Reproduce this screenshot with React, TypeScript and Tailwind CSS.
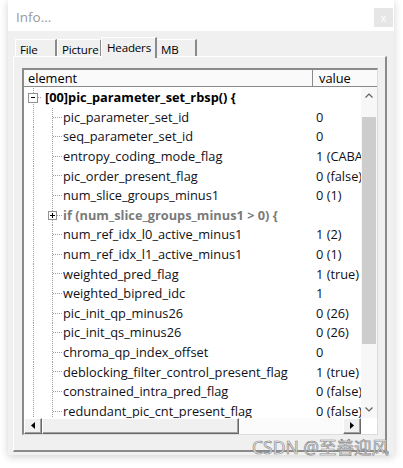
import React from 'react';

type Row = { name: string; value?: string; kind?: 'root' | 'group' | 'leaf' };

const rows: Row[] = [
  { name: '[00]pic_parameter_set_rbsp() {', kind: 'root' },
  { name: 'pic_parameter_set_id', value: '0' },
  { name: 'seq_parameter_set_id', value: '0' },
  { name: 'entropy_coding_mode_flag', value: '1 (CABAC)' },
  { name: 'pic_order_present_flag', value: '0 (false)' },
  { name: 'num_slice_groups_minus1', value: '0 (1)' },
  { name: 'if (num_slice_groups_minus1 > 0) {', kind: 'group' },
  { name: 'num_ref_idx_l0_active_minus1', value: '1 (2)' },
  { name: 'num_ref_idx_l1_active_minus1', value: '0 (1)' },
  { name: 'weighted_pred_flag', value: '1 (true)' },
  { name: 'weighted_bipred_idc', value: '1' },
  { name: 'pic_init_qp_minus26', value: '0 (26)' },
  { name: 'pic_init_qs_minus26', value: '0 (26)' },
  { name: 'chroma_qp_index_offset', value: '0' },
  { name: 'deblocking_filter_control_present_flag', value: '1 (true)' },
  { name: 'constrained_intra_pred_flag', value: '0 (false)' },
  { name: 'redundant_pic_cnt_present_flag', value: '0 (false)' },
];

const font = { fontFamily: '"Open Sans", "Noto Sans", sans-serif' };

function TreeLines({ kind }: { kind: Row['kind'] }) {
  const dot = { stroke: '#a0a0a0', strokeWidth: 1, strokeDasharray: '1 1' };
  if (kind === 'root') {
    return (
      <svg width="21" height="19.6" viewBox="0 0 21 19.6" className="shrink-0" shapeRendering="crispEdges">
        <line x1="9.5" y1="14" x2="9.5" y2="19.6" {...dot} />
        <line x1="9.5" y1="0" x2="9.5" y2="5" {...dot} />
        <line x1="14" y1="9.5" x2="18" y2="9.5" {...dot} />
        <rect x="4.5" y="5.5" width="9" height="9" fill="#fff" stroke="#919191" />
        <line x1="6.5" y1="10" x2="11.5" y2="10" stroke="#000" />
      </svg>
    );
  }
  return (
    <svg width="39" height="19.6" viewBox="0 0 39 19.6" className="shrink-0" shapeRendering="crispEdges">
      <line x1="9.5" y1="0" x2="9.5" y2="19.6" {...dot} />
      <line x1="28.5" y1="0" x2="28.5" y2="19.6" {...dot} />
      <line x1="29" y1="9.5" x2="38" y2="9.5" {...dot} />
      {kind === 'group' && (
        <>
          <rect x="24.5" y="5.5" width="8" height="8" fill="#fff" stroke="#919191" />
          <line x1="26.5" y1="9.5" x2="31" y2="9.5" stroke="#000" />
          <line x1="28.5" y1="7.5" x2="28.5" y2="12" stroke="#000" />
        </>
      )}
    </svg>
  );
}

function TreeRow({ row }: { row: Row }) {
  const isRoot = row.kind === 'root';
  const isGroup = row.kind === 'group';
  return (
    <div className="flex h-[19.6px] shrink-0 items-center">
      <div className="flex w-[292px] shrink-0 items-center overflow-hidden">
        <TreeLines kind={row.kind} />
        <span
          className={
            isRoot
              ? 'whitespace-nowrap text-[12.8px] font-bold text-black'
              : isGroup
              ? 'whitespace-nowrap text-[12.8px] font-bold text-[#7a7a7a]'
              : 'whitespace-nowrap text-[12.8px] text-[#101018]'
          }
        >
          {row.name}
        </span>
      </div>
      <span className="whitespace-nowrap text-[12.8px] text-[#101018]">{row.value}</span>
    </div>
  );
}

function ClassicButton({ children, className = '' }: { children?: React.ReactNode; className?: string }) {
  return (
    <div className={`border border-t-white border-l-white border-r-[#696969] border-b-[#696969] bg-[#f0f0f0] ${className}`}>
      <div className="flex h-full w-full items-center justify-center border-r border-b border-r-[#a0a0a0] border-b-[#a0a0a0]">
        {children}
      </div>
    </div>
  );
}

function Tab({ label, active }: { label: string; active?: boolean }) {
  if (active) {
    return (
      <div className="relative z-10 -mx-[1px] flex h-[21px] w-[56px] items-start border-t border-l border-r-2 border-t-white border-l-white border-r-[#8a8a8a] bg-[#f0f0f0] pl-[5px] pt-[1px] text-[11.6px] leading-[17px] tracking-[-0.2px] text-black">
        {label}
      </div>
    );
  }
  return (
    <div className="mt-[2px] flex h-[18px] items-start border-t border-l border-r-2 border-t-white border-l-white border-r-[#8a8a8a] bg-[#f0f0f0] pl-[4px] text-[11.6px] leading-[19px] tracking-[-0.2px] text-black">
      {label}
    </div>
  );
}

export default function App() {
  return (
    <div className="relative h-[468px] w-[403px] overflow-hidden bg-white" style={font}>
      <div className="ml-[8px] flex h-[455px] w-[386px] flex-col bg-[#f0f0f0] shadow-[0_2px_8px_rgba(0,0,0,0.18)]">
        {/* Title bar */}
        <div className="flex h-[31px] shrink-0 items-start bg-white">
          <span className="pl-[8px] pt-[7px] text-[13.5px] text-[#9a9a9a]">Info...</span>
          <div className="ml-auto mr-[1px] mt-[8px] flex h-[19px] w-[19px] items-center justify-center bg-[#e6e6e6] text-[11px] leading-none text-white">
            x
          </div>
        </div>

        {/* Body */}
        <div className="flex flex-1 flex-col pl-[5px] pr-[7px] pt-[6px]">
          <div className="flex h-[20px] shrink-0 items-start pl-[2px]">
            <div className="w-[42px]"><Tab label="File" /></div>
            <div className="w-[45px]"><Tab label="Picture" /></div>
            <Tab label="Headers" active />
            <div className="w-[41px]"><Tab label="MB" /></div>
          </div>

          {/* Tab panel */}
          <div className="-mt-[1px] flex h-[396px] flex-col border-t border-l border-r-2 border-b-2 border-t-white border-l-white border-r-[#8a8a8a] border-b-[#8a8a8a] pl-[8px] pr-[7px] pt-[11px]">
            {/* Tree control */}
            <div className="flex h-[367px] w-[356px] flex-col border-t-2 border-l-2 border-r border-b border-t-[#8a8a8a] border-l-[#8a8a8a] border-r-[#dcdcdc] border-b-[#dcdcdc] bg-white">
              {/* Header */}
              <div className="flex h-[17px] shrink-0 border-b border-b-[#8a8a8a] bg-[#fafafa] text-[12.8px] leading-[16px] text-black">
                <div className="w-[289px] shrink-0 border-r border-r-[#8a8a8a] pl-[4px]">element</div>
                <div className="flex-1 pl-[6px]">value</div>
              </div>

              {/* Body */}
              <div className="flex h-[331px] shrink-0">
                <div className="flex w-[337px] shrink-0 flex-col overflow-hidden pt-[1px]">
                  {rows.map((r) => (
                    <TreeRow key={r.name} row={r} />
                  ))}
                </div>
                {/* Vertical scrollbar */}
                <div className="flex w-[16px] shrink-0 flex-col bg-[#f7f7f7]">
                  <div className="flex h-[17px] shrink-0 items-center justify-center">
                    <svg width="8" height="5" viewBox="0 0 8 5">
                      <path d="M0.5 4.5 L4 1 L7.5 4.5" fill="none" stroke="#606060" strokeWidth="1.2" />
                    </svg>
                  </div>
                  <div className="h-[13px] shrink-0" />
                  <div className="mx-[1px] h-[227px] shrink-0 bg-[#cdcdcd]" />
                  <div className="flex-1" />
                  <div className="flex h-[17px] shrink-0 items-center justify-center">
                    <svg width="8" height="5" viewBox="0 0 8 5">
                      <path d="M0.5 0.5 L4 4 L7.5 0.5" fill="none" stroke="#606060" strokeWidth="1.2" />
                    </svg>
                  </div>
                </div>
              </div>

              {/* Horizontal scrollbar */}
              <div className="flex h-[16px] shrink-0 bg-[#fbfbfb]">
                <ClassicButton className="h-[16px] w-[18px] shrink-0">
                  <svg width="4" height="7" viewBox="0 0 4 7">
                    <path d="M4 0 L0 3.5 L4 7 Z" fill="#000" />
                  </svg>
                </ClassicButton>
                <ClassicButton className="h-[16px] w-[197px] shrink-0" />
                <div className="flex-1" />
                <ClassicButton className="h-[16px] w-[18px] shrink-0">
                  <svg width="4" height="7" viewBox="0 0 4 7">
                    <path d="M0 0 L4 3.5 L0 7 Z" fill="#000" />
                  </svg>
                </ClassicButton>
                <div className="w-[16px] shrink-0 bg-white" />
              </div>
            </div>
          </div>
        </div>
      </div>

      {/* Watermark */}
      <div
        className="absolute left-[252px] top-[434px] whitespace-nowrap text-[17.5px] text-[#f4f4f4] [-webkit-text-stroke:0.7px_#8c8c8c]"
        style={{ fontFamily: '"Noto Sans", "Noto Sans CJK SC", sans-serif' }}
      >
        CSDN @至善迎风
      </div>
    </div>
  );
}
